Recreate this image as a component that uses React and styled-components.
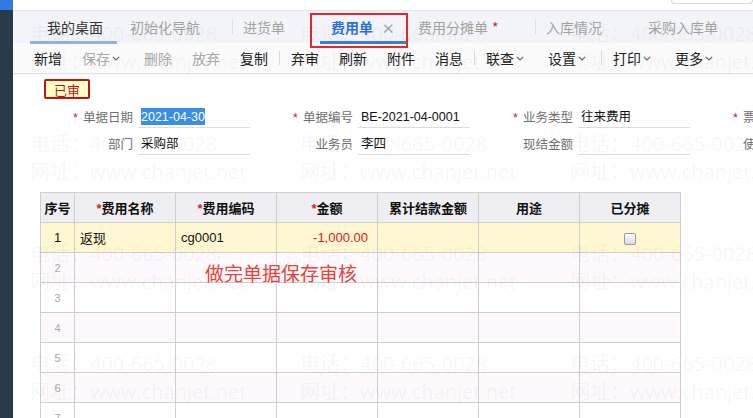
import styled, { createGlobalStyle } from "styled-components";

const GlobalStyle = createGlobalStyle`
  html, body {
    margin: 0;
    padding: 0;
    background: #fff;
    font-family: "Liberation Sans", "Noto Sans CJK SC", sans-serif;
    overflow: hidden;
  }
`;

const Shell = styled.div`
  display: flex;
  width: 753px;
  height: 418px;
  overflow: hidden;
  position: relative;
`;

const Sidebar = styled.div`
  width: 13px;
  flex: none;
  background: #2b3a4b;
  &::before {
    content: "";
    display: block;
    height: 10px;
    background: #2e7be2;
  }
`;

const Main = styled.div`
  flex: 1;
  display: flex;
  flex-direction: column;
  min-width: 0;
  min-height: 0;
`;

const TopStrip = styled.div`
  flex: none;
  height: 10px;
  display: flex;
  justify-content: flex-end;
  background: #fff;
`;

const SearchStub = styled.div`
  width: 80px;
  height: 3px;
  border: 1px solid #d6d9df;
  border-top: none;
  border-radius: 0 0 4px 4px;
`;

const TabBar = styled.div`
  flex: none;
  height: 32px;
  display: flex;
  align-items: stretch;
  background: #f2f4f9;
  border-top: 1px solid #e1e4ea;
  padding-left: 17px;
  position: relative;
  z-index: 2;
  font-family: "Noto Sans CJK SC", sans-serif;
`;

const Tab = styled.div`
  width: ${(p) => p.$w}px;
  padding-left: ${(p) => p.$pl}px;
  box-sizing: border-box;
  display: flex;
  align-items: center;
  font-size: 14px;
  color: ${(p) => (p.$active ? "#2a6fdc" : p.$dark ? "#333" : "#a3a3a3")};
  font-weight: ${(p) => (p.$active ? 700 : 400)};
  position: relative;
  white-space: nowrap;
  &::before {
    content: "";
    display: ${(p) => (p.$line ? "block" : "none")};
    position: absolute;
    left: ${(p) => (p.$active ? 10 : 0)}px;
    right: 0;
    bottom: -1px;
    height: 3px;
    background: ${(p) => (p.$active ? "#3a7be0" : "#8fb0e8")};
  }
  &::after {
    content: "";
    display: ${(p) => (p.$active ? "block" : "none")};
    position: absolute;
    left: 0;
    right: 0;
    top: 2px;
    bottom: -5px;
    border: 2px solid #e2282a;
    pointer-events: none;
  }
`;

const Close = styled.span`
  color: #aaa;
  font-weight: 400;
  font-size: 15px;
  margin-left: 9px;
`;

const Star = styled.span`
  color: #d21e3c;
  margin-left: ${(p) => (p.$tight ? 0 : 4)}px;
`;

const TabSep = styled.div`
  width: 1px;
  margin: 9px 0;
  background: #dcdfe5;
`;

const Toolbar = styled.div`
  flex: none;
  height: 30px;
  display: flex;
  align-items: center;
  padding-left: 11px;
  background: #fbfbfc;
  border-bottom: 1px solid #e3e3e6;
  box-shadow: 0 1px 2px rgba(0, 0, 0, 0.05);
  font-family: "Noto Sans CJK SC", sans-serif;
`;

const ToolButton = styled.div`
  padding: 0 ${(p) => (p.$caret ? 14 : 10)}px 0 10px;
  font-size: 14px;
  color: ${(p) => (p.$disabled ? "#a8a8a8" : "#222")};
  display: flex;
  align-items: center;
  gap: 2px;
  white-space: nowrap;
`;

const ToolSep = styled.div`
  width: 1px;
  height: 14px;
  margin: 0 1px;
  background: #d8d8d8;
`;

const Caret = () => (
  <svg width="8" height="7" viewBox="0 0 8 7">
    <path d="M0.8 1.8l3.2 3.2 3.2-3.2" fill="none" stroke="#666" strokeWidth="1.1" />
  </svg>
);

const Content = styled.div`
  flex: 1;
  min-height: 0;
  padding-top: 5px;
`;

const Badge = styled.div`
  margin-left: 31px;
  width: 46px;
  height: 20px;
  box-sizing: border-box;
  border: 2px solid #c0150f;
  border-radius: 2px;
  background: #ffffcc;
  color: #c0150f;
  font-size: 13px;
  display: flex;
  align-items: center;
  justify-content: center;
`;

const Form = styled.div`
  margin-top: 9px;
  margin-left: 17px;
  display: flex;
  flex-direction: column;
  gap: 7px;
`;

const FormRow = styled.div`
  display: flex;
`;

const Field = styled.div`
  width: 220px;
  flex: none;
  display: flex;
  align-items: flex-end;
`;

const Label = styled.div`
  width: 108px;
  padding-right: 5px;
  box-sizing: border-box;
  text-align: right;
  font-size: 12.5px;
  color: #707070;
  line-height: 20px;
  white-space: nowrap;
`;

const ReqStar = styled.span`
  color: #c8143c;
  margin-right: 5px;
`;

const Value = styled.div`
  width: 112px;
  height: 20px;
  box-sizing: border-box;
  padding-left: 3px;
  border-bottom: 1px solid #dcdcdc;
  font-size: 12.5px;
  color: #111;
  line-height: 19px;
  white-space: nowrap;
`;

const Selected = styled.span`
  background: #3a8ee6;
  color: #fff;
  padding: 2px 0 1px;
`;

const Grid = styled.table`
  margin-top: 37px;
  margin-left: 27px;
  border-collapse: collapse;
  table-layout: fixed;
  font-size: 13px;
`;

const Th = styled.th`
  width: ${(p) => p.$w}px;
  height: 29px;
  padding: 0;
  border: 1px solid #cfcfcf;
  background: #efeef2;
  font-weight: 700;
  color: #111;
  font-size: 13px;
`;

const Tr = styled.tr`
  height: 30px;
  background: ${(p) => (p.$first ? "#fff7d2" : p.$alt ? "#fdf9fc" : "#fff")};
`;

const Td = styled.td`
  padding: 0 ${(p) => (p.$right ? 9 : 5)}px;
  border: 1px solid #cfcfcf;
  text-align: ${(p) => (p.$center ? "center" : p.$right ? "right" : "left")};
  color: ${(p) => (p.$red ? "#d21e1e" : "#111")};
  white-space: nowrap;
  overflow: hidden;
`;

const RowNo = styled.td`
  padding: 0;
  border: 1px solid #cfcfcf;
  text-align: center;
  font-size: ${(p) => (p.$first ? 13 : 11)}px;
  color: ${(p) => (p.$first ? "#111" : "#a8a8a8")};
`;

const Check = styled.span`
  display: inline-block;
  width: 10px;
  height: 10px;
  border: 1px solid #9a9a9a;
  border-radius: 2px;
  background: linear-gradient(#fdfdfd, #d9dbe0);
  vertical-align: middle;
`;

const Note = styled.div`
  position: absolute;
  left: 205px;
  top: 259px;
  font-family: "Noto Sans CJK SC", sans-serif;
  font-size: 19px;
  color: #e8413c;
  white-space: nowrap;
  z-index: 4;
`;

const Watermark = styled.div`
  position: absolute;
  inset: 0;
  padding: 20px 0 0 30px;
  display: grid;
  grid-template-columns: repeat(3, 270px);
  grid-auto-rows: 110px;
  pointer-events: none;
  z-index: 5;
  overflow: hidden;
`;

const Mark = styled.div`
  font-family: "Open Sans", "Noto Sans CJK SC", sans-serif;
  font-size: 20px;
  line-height: 28px;
  color: rgba(0, 0, 0, 0.05);
  white-space: nowrap;
`;

const tabs = [
  { t: "我的桌面", w: 87, pl: 17, dark: true, line: true },
  { t: "初始化导航", w: 115, pl: 13 },
  "sep",
  { t: "进货单", w: 77, pl: 10 },
  { t: "费用单", w: 98, pl: 21, active: true },
  { t: "费用分摊单", w: 127, pl: 10, star: true },
  "sep",
  { t: "入库情况", w: 101, pl: 10 },
  { t: "采购入库单", w: 110, pl: 11 },
];

const tools = [
  { t: "新增" },
  { t: "保存", d: true, c: true },
  { t: "删除", d: true },
  { t: "放弃", d: true },
  { t: "复制" },
  "sep",
  { t: "弃审" },
  { t: "刷新" },
  { t: "附件" },
  { t: "消息" },
  "sep",
  { t: "联查", c: true },
  { t: "设置", c: true },
  "sep",
  { t: "打印", c: true },
  { t: "更多", c: true },
];

const columns = [
  { t: "序号", w: 33 },
  { t: "费用名称", w: 100, req: true },
  { t: "费用编码", w: 100, req: true },
  { t: "金额", w: 100, req: true },
  { t: "累计结款金额", w: 100 },
  { t: "用途", w: 100 },
  { t: "已分摊", w: 100 },
];

export default function App() {
  return (
    <>
      <GlobalStyle />
      <Shell>
        <Sidebar />
        <Main>
          <TopStrip>
            <SearchStub />
          </TopStrip>
          <TabBar>
            {tabs.map((tab, i) =>
              tab === "sep" ? (
                <TabSep key={i} />
              ) : (
                <Tab
                  key={i}
                  $w={tab.w}
                  $pl={tab.pl}
                  $active={tab.active}
                  $dark={tab.dark}
                  $line={tab.line || tab.active}
                >
                  {tab.t}
                  {tab.active && <Close>✕</Close>}
                  {tab.star && <Star>*</Star>}
                </Tab>
              )
            )}
          </TabBar>
          <Toolbar>
            {tools.map((b, i) =>
              b === "sep" ? (
                <ToolSep key={i} />
              ) : (
                <ToolButton key={i} $disabled={b.d} $caret={b.c}>
                  {b.t}
                  {b.c && <Caret />}
                </ToolButton>
              )
            )}
          </Toolbar>
          <Content>
            <Badge>已审</Badge>
            <Form>
              <FormRow>
                <Field>
                  <Label>
                    <ReqStar>*</ReqStar>单据日期
                  </Label>
                  <Value>
                    <Selected>2021-04-30</Selected>
                  </Value>
                </Field>
                <Field>
                  <Label>
                    <ReqStar>*</ReqStar>单据编号
                  </Label>
                  <Value>BE-2021-04-0001</Value>
                </Field>
                <Field>
                  <Label>
                    <ReqStar>*</ReqStar>业务类型
                  </Label>
                  <Value>往来费用</Value>
                </Field>
                <Field>
                  <Label>
                    <ReqStar>*</ReqStar>票据类型
                  </Label>
                  <Value />
                </Field>
              </FormRow>
              <FormRow>
                <Field>
                  <Label>部门</Label>
                  <Value>采购部</Value>
                </Field>
                <Field>
                  <Label>业务员</Label>
                  <Value>李四</Value>
                </Field>
                <Field>
                  <Label>现结金额</Label>
                  <Value />
                </Field>
                <Field>
                  <Label>使用预付</Label>
                  <Value />
                </Field>
              </FormRow>
            </Form>
            <Grid>
              <thead>
                <tr>
                  {columns.map((c) => (
                    <Th key={c.t} $w={c.w}>
                      {c.req && <Star $tight>*</Star>}
                      {c.t}
                    </Th>
                  ))}
                </tr>
              </thead>
              <tbody>
                <Tr $first>
                  <RowNo $first>1</RowNo>
                  <Td>返现</Td>
                  <Td>cg0001</Td>
                  <Td $right $red>
                    -1,000.00
                  </Td>
                  <Td />
                  <Td />
                  <Td $center>
                    <Check />
                  </Td>
                </Tr>
                {[2, 3, 4, 5, 6, 7].map((n) => (
                  <Tr key={n} $alt={n % 2 === 0}>
                    <RowNo>{n}</RowNo>
                    <Td />
                    <Td />
                    <Td />
                    <Td />
                    <Td />
                    <Td />
                  </Tr>
                ))}
              </tbody>
            </Grid>
          </Content>
        </Main>
        <Note>做完单据保存审核</Note>
        <Watermark>
          {Array.from({ length: 12 }).map((_, i) => (
            <Mark key={i}>
              <div>电话：400-665-0028</div>
              <div>网址：www.chanjet.net</div>
            </Mark>
          ))}
        </Watermark>
      </Shell>
    </>
  );
}
